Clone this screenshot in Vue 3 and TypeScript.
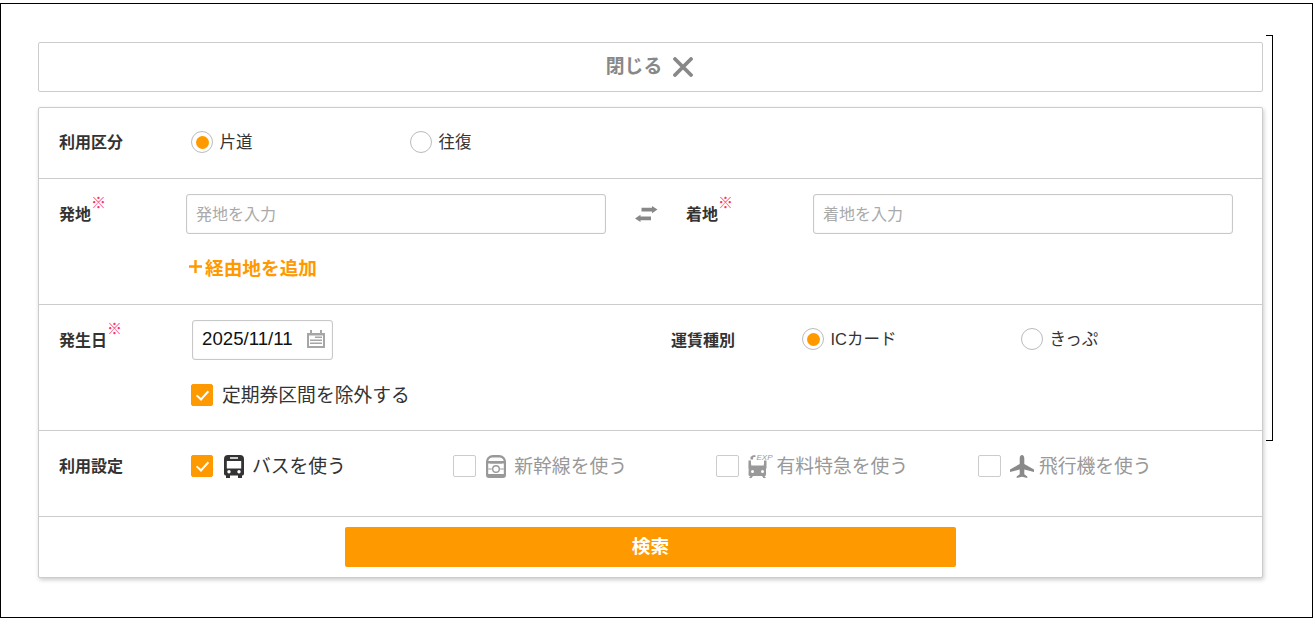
<script setup lang="ts">
import { ref } from 'vue'

const tripType = ref('oneway')
const fareType = ref('ic')
const from = ref('')
const to = ref('')
const date = ref('2025/11/11')
const excludePass = ref(true)

const tripOptions = [
  { value: 'oneway', label: '片道' },
  { value: 'round', label: '往復' },
]
const fareOptions = [
  { value: 'ic', label: 'ICカード' },
  { value: 'ticket', label: 'きっぷ' },
]

const transports = ref([
  { key: 'bus', label: 'バスを使う', checked: true },
  { key: 'shinkansen', label: '新幹線を使う', checked: false },
  { key: 'express', label: '有料特急を使う', checked: false },
  { key: 'plane', label: '飛行機を使う', checked: false },
])
</script>

<template>
  <div class="frame">
    <span class="bracket" />

    <button class="close-btn" type="button">
      <span>閉じる</span>
      <svg width="20" height="20" viewBox="0 0 20 20">
        <path d="M2 2 18 18M18 2 2 18" stroke="#888" stroke-width="3.8" stroke-linecap="round" fill="none" />
      </svg>
    </button>

    <form class="card" @submit.prevent>
      <div class="row row-trip">
        <span class="label">利用区分</span>
        <div class="radios">
          <label v-for="opt in tripOptions" :key="opt.value" class="radio">
            <input v-model="tripType" type="radio" :value="opt.value">
            <span class="radio-mark" />
            <span class="radio-text">{{ opt.label }}</span>
          </label>
        </div>
      </div>

      <div class="row row-route">
        <span class="label">発地<i class="req">※</i></span>
        <input v-model="from" class="text-input" type="text" placeholder="発地を入力">
        <div class="swap">
          <svg width="23" height="16" viewBox="0 0 23 16">
            <path d="M6.500 1.800H17V0l5.500 3.600L17 7.200V5.400H6.500zM16 10.600H5.500V8.800L0 12.400 5.500 16v-1.800H16z" fill="#888" />
          </svg>
        </div>
        <span class="label">着地<i class="req">※</i></span>
        <input v-model="to" class="text-input" type="text" placeholder="着地を入力">
        <a class="add-via" href="#" @click.prevent>
          <svg width="13" height="13" viewBox="0 0 13 13">
            <path d="M6.500 0v13M0 6.500h13" stroke="#f90" stroke-width="2.400" fill="none" />
          </svg>
          <span>経由地を追加</span>
        </a>
      </div>

      <div class="row row-date">
        <span class="label">発生日<i class="req">※</i></span>
        <div class="date-box">
          <input v-model="date" class="date-input" type="text">
          <svg width="18" height="18" viewBox="0 0 18 18">
            <path d="M3 0h2v3h8V0h2v3h3v15H0V3h3z" fill="#a6a6a6" />
            <path d="M2 5.500h14V16H2z" fill="#fff" />
            <path d="M8 6.500h7V8H8zM3 9.500h12V11H3zM3 12.500h12V14H3z" fill="#a6a6a6" />
          </svg>
        </div>
        <span class="label">運賃種別</span>
        <div class="radios">
          <label v-for="opt in fareOptions" :key="opt.value" class="radio">
            <input v-model="fareType" type="radio" :value="opt.value">
            <span class="radio-mark" />
            <span class="radio-text">{{ opt.label }}</span>
          </label>
        </div>
        <label class="check check-pass">
          <input v-model="excludePass" type="checkbox">
          <span class="check-mark" />
          <span class="check-text">定期券区間を除外する</span>
        </label>
      </div>

      <div class="row row-transport">
        <span class="label">利用設定</span>
        <div class="transports">
          <label
            v-for="item in transports"
            :key="item.key"
            class="check"
            :class="{ off: !item.checked }"
          >
            <input v-model="item.checked" type="checkbox">
            <span class="check-mark" />
            <span class="icon-slot">
              <svg v-if="item.key === 'bus'" width="20" height="23" viewBox="0 0 20 23">
                <path d="M4 0h12a4 4 0 0 1 4 4v15a2 2 0 0 1-2 1.500V23h-4v-2.500H6V23H2v-2.500A2 2 0 0 1 0 19V4a4 4 0 0 1 4-4z" fill="#333" />
                <path d="M6 2.200h8v1.600H6zM2.800 6h14.400v7.500H2.800z" fill="#fff" />
                <circle cx="5" cy="16.700" r="1.700" fill="#fff" />
                <circle cx="15" cy="16.700" r="1.700" fill="#fff" />
              </svg>
              <svg v-else-if="item.key === 'shinkansen'" width="20" height="23" viewBox="0 0 20 23">
                <path d="M7 0h6c4 0 7 3 7 7v13c0 2-1 3-3 3H3c-2 0-3-1-3-3V7c0-4 3-7 7-7z" fill="#999" />
                <path d="M6.500 2.500h7c2 0 4 1.500 4.200 3.500H2.300C2.500 4 4.500 2.500 6.500 2.500zM2.200 8.500h15.600V19H2.200z" fill="#fff" />
                <path d="M4 7h12v1.500H4z" fill="#999" />
                <circle cx="10" cy="14" r="3.300" fill="#fff" stroke="#999" stroke-width="1.400" />
                <path d="M2.200 14h3.600M14.200 14h3.600" stroke="#999" stroke-width="1" />
              </svg>
              <svg v-else-if="item.key === 'express'" class="express" width="26" height="25" viewBox="0 0 26 25">
                <text x="8.500" y="6.500" class="exp">EXP</text>
                <path d="M5 2.300h2.500V4H5.300L5 6.500H2.500V4zM1 8h2v3h13V8h2v13.500a1.500 1.500 0 0 1-1.500 1.500h-15A1.500 1.500 0 0 1 0.500 21.500z" fill="#999" />
                <path d="M0.500 7.500h2.500v5h13v-5h2.500v8H0.500z" fill="#999" />
                <path d="M3.200 7.500h12.600v5H3.200z" fill="#fff" />
                <circle cx="4.500" cy="18.500" r="1.500" fill="#fff" />
                <circle cx="14.500" cy="18.500" r="1.500" fill="#fff" />
                <path d="M2.500 23 1 25h2.500l1.500-2zM16.500 23l1.500 2h-2.500L14 23z" fill="#999" />
              </svg>
              <svg v-else class="plane" width="24" height="24" viewBox="0 0 24 24">
                <path d="M12 0c1.400 0 2.300 1.500 2.300 3.500V9L24 14.500V17l-9.700-2.500v4.700l3 2.300V23L12 21.800 6.700 23v-1.500l3-2.300v-4.700L0 17v-2.500L9.700 9V3.500C9.700 1.500 10.600 0 12 0z" fill="#8a8a8a" />
              </svg>
            </span>
            <span class="check-text">{{ item.label }}</span>
          </label>
        </div>
      </div>

      <div class="row-submit">
        <button class="search-btn" type="submit">検索</button>
      </div>
    </form>
  </div>
</template>

<style scoped>
.frame {
  position: relative;
  box-sizing: border-box;
  width: 1313px;
  height: 615px;
  margin-top: 3px;
  padding: 38px 49px 0 37px;
  border: 1px solid #000;
  background: #fff;
  color: #333;
  font-family: "Liberation Sans", "Noto Sans CJK JP", sans-serif;
}

.bracket {
  position: absolute;
  top: 31px;
  left: 1265px;
  width: 6px;
  height: 404px;
  border: 1px solid #000;
  border-left: 0;
}

.close-btn {
  display: flex;
  align-items: center;
  justify-content: center;
  gap: 11px;
  box-sizing: border-box;
  width: 100%;
  height: 50px;
  padding: 0 2px 0 0;
  border: 1px solid #ccc;
  border-radius: 2px;
  background: #fff;
  color: #888;
  font: bold 18.8px "Liberation Sans", "Noto Sans CJK JP", sans-serif;
  cursor: pointer;
}

.close-btn span {
  position: relative;
  top: -3px;
}

.card {
  margin-top: 15px;
  border: 1px solid #ccc;
  border-radius: 2px;
  background: #fff;
  box-shadow: 1px 2px 4px rgba(0, 0, 0, 0.2);
}

.row {
  padding-left: 20px;
  border-bottom: 1px solid #ccc;
}

.label {
  position: relative;
  top: 1px;
  justify-self: start;
  color: #333;
  font-size: 16px;
  font-weight: bold;
  line-height: 22px;
}

.req {
  position: absolute;
  top: -11px;
  left: 100%;
  color: #f36;
  font-size: 15px;
  font-style: normal;
  font-weight: normal;
  line-height: 20px;
  white-space: nowrap;
}

/* radio */
.radios {
  display: grid;
  grid-template-columns: repeat(2, 219px);
}

.radio,
.check {
  display: flex;
  align-items: center;
  cursor: pointer;
}

.radio input,
.check input {
  position: absolute;
  opacity: 0;
  pointer-events: none;
}

.radio {
  height: 22px;
  color: #333;
  font-size: 16.5px;
}

.radio-text {
  position: relative;
  top: -1px;
}

.radio-mark {
  display: grid;
  place-items: center;
  box-sizing: border-box;
  width: 22px;
  height: 22px;
  margin-right: 6.5px;
  border: 1px solid #bbb;
  border-radius: 50%;
  background: #fff;
}

.radio input:checked + .radio-mark::after {
  content: "";
  width: 13px;
  height: 13px;
  border-radius: 50%;
  background: #f90;
}

/* checkbox */
.check {
  height: 22px;
  color: #333;
  font-size: 18.8px;
}

.check.off {
  color: #999;
}

.check-text {
  position: relative;
  top: -2px;
}

.check-mark {
  position: relative;
  flex: none;
  box-sizing: border-box;
  width: 22px;
  height: 22px;
  margin-right: 11px;
  border: 1px solid #ccc;
  border-radius: 2px;
  background: #fff;
}

.check.off .check-mark {
  width: 23px;
  margin-right: 10px;
}

.check input:checked + .check-mark {
  border-color: #f90;
  background: #f90;
}

.check input:checked + .check-mark::after {
  content: "";
  position: absolute;
  top: 3px;
  left: 7px;
  width: 5px;
  height: 10px;
  border: solid #fff;
  border-width: 0 2px 2px 0;
  transform: rotate(42deg);
}

.icon-slot {
  display: flex;
  flex: none;
  align-items: flex-start;
  width: 28px;
  height: 22px;
}

.express {
  margin: -2px -6px 0 -1px;
}

.plane {
  margin-left: -1px;
}

.exp {
  fill: #999;
  font-family: "Liberation Sans", sans-serif;
  font-size: 8px;
  font-style: italic;
}

/* route */
.row-trip {
  display: grid;
  grid-template-columns: 132px 1fr;
  padding-top: 23px;
  padding-bottom: 25px;
}

.row-route {
  display: grid;
  grid-template-columns: 127px 420px 80px 127px 420px;
  align-items: center;
  padding-top: 15px;
  padding-bottom: 24px;
}

.text-input {
  box-sizing: border-box;
  width: 100%;
  height: 40px;
  padding: 1px 9px 0;
  border: 1px solid #c8c8c8;
  border-radius: 3px;
  outline: none;
  box-shadow: inset 0 0 1px #ccc;
  color: #333;
  font: 16px "Liberation Sans", "Noto Sans CJK JP", sans-serif;
}

.text-input::placeholder {
  color: #aaa;
  opacity: 1;
}

.swap {
  display: flex;
  padding-left: 29px;
}

.add-via {
  display: flex;
  grid-column: 2;
  align-items: center;
  gap: 3px;
  height: 28px;
  margin-top: 18px;
  padding-left: 3px;
  color: #f90;
  font-size: 18.67px;
  font-weight: bold;
  text-decoration: none;
}

/* date */
.row-date {
  display: grid;
  grid-template-columns: 132px 480px 131px 1fr;
  align-items: center;
  padding-top: 15px;
  padding-bottom: 24px;
}

.row-date .radios {
  margin-top: -2px;
}

.date-box {
  display: flex;
  align-items: center;
  box-sizing: border-box;
  width: 141px;
  height: 40px;
  margin-left: 1px;
  padding-right: 7px;
  border: 1px solid #c8c8c8;
  border-radius: 3px;
  box-shadow: inset 0 0 1px #ccc;
}

.date-input {
  flex: 1;
  min-width: 0;
  padding: 0 0 2px 9px;
  border: 0;
  outline: none;
  background: transparent;
  color: #111;
  font: 18.67px "Liberation Sans", sans-serif;
}

.date-box svg {
  margin-top: -2px;
}

.check-pass {
  grid-column: 2 / 4;
  margin-top: 24px;
}

.check-pass .check-mark {
  margin-right: 9px;
}

/* transport */
.row-transport {
  display: grid;
  grid-template-columns: 132px 1fr;
  align-items: start;
  padding-top: 24px;
  padding-bottom: 39px;
}

.transports {
  display: grid;
  grid-template-columns: repeat(4, 262.3px);
}

/* submit */
.row-submit {
  display: flex;
  justify-content: center;
  padding: 10px 0;
}

.search-btn {
  width: 611px;
  height: 40px;
  padding: 0 0 5px;
  border: 0;
  border-radius: 2px;
  background: #f90;
  color: #fff;
  font: bold 18.67px "Liberation Sans", "Noto Sans CJK JP", sans-serif;
  cursor: pointer;
}
</style>
